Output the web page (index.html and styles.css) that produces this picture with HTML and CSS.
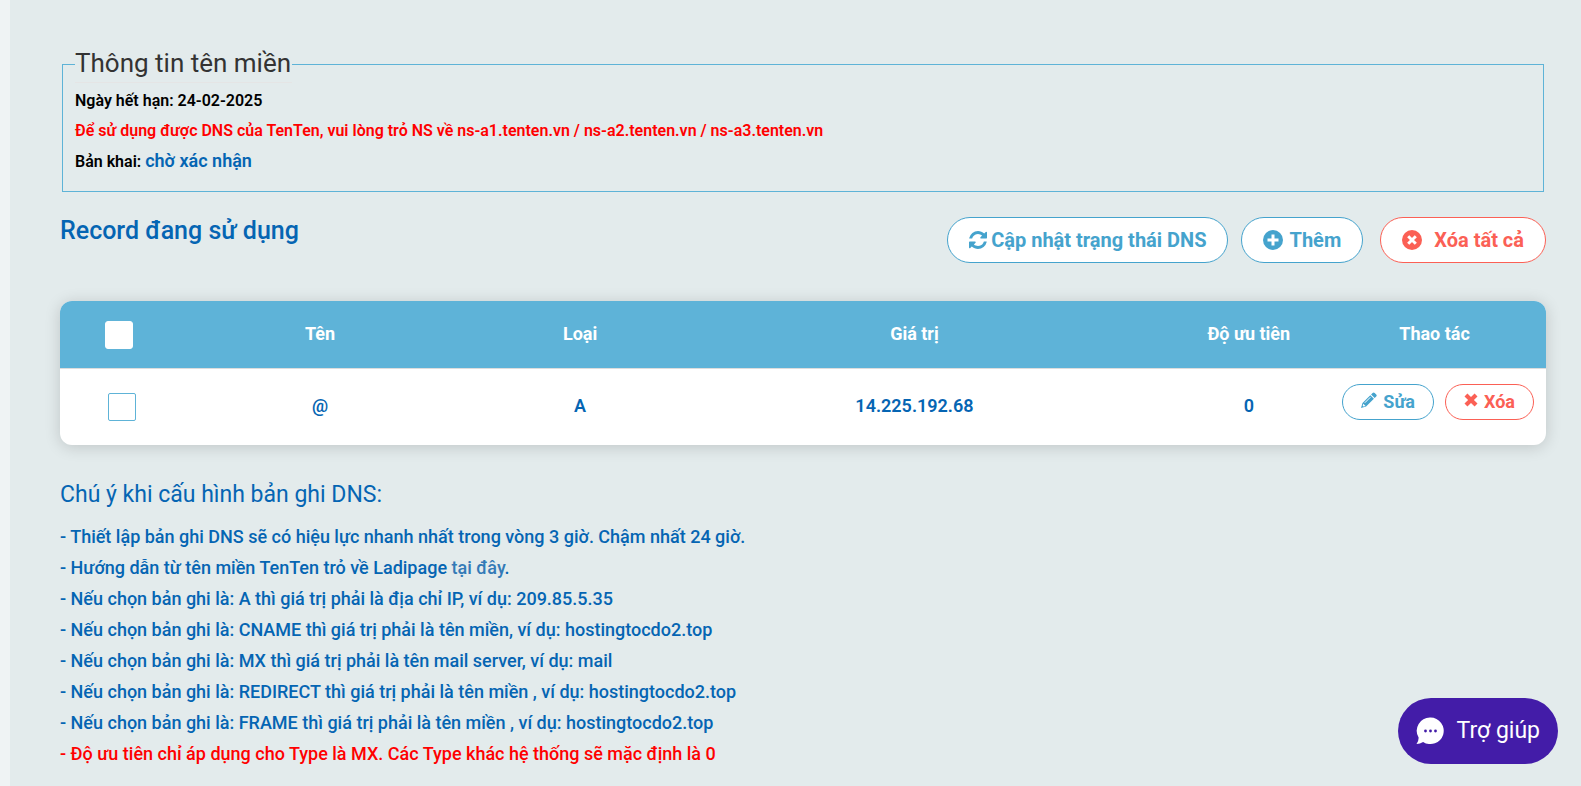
FILE: index.html
```html
<!DOCTYPE html>
<html lang="vi">
<head>
<meta charset="utf-8">
<title>Quản lý DNS</title>
<meta name="viewport" content="width=device-width, initial-scale=1">
<link rel="stylesheet" href="styles.css">
</head>
<body>
<main class="panel">
  <fieldset class="domain">
    <legend class="domain-title">Thông tin tên miền</legend>
    <p class="domain-line">Ngày hết hạn: 24-02-2025</p>
    <p class="domain-line warning">Để sử dụng được DNS của TenTen, vui lòng trỏ NS về ns-a1.tenten.vn / ns-a2.tenten.vn / ns-a3.tenten.vn</p>
    <p class="domain-line">Bản khai: <span class="status">chờ xác nhận</span></p>
  </fieldset>

  <div class="toolbar">
    <h2 class="toolbar-title">Record đang sử dụng</h2>
    <div class="toolbar-actions">
      <button class="btn" type="button">
        <svg class="icon-refresh" viewBox="0 0 1536 1536" aria-hidden="true"><path d="M1511 928q0 5-1 7-64 268-268 434.500T764 1536q-146 0-282.500-55T238 1324l-129 129q-19 19-45 19t-45-19-19-45V960q0-26 19-45t45-19h448q26 0 45 19t19 45-19 45l-137 137q71 66 161 102t187 36q134 0 250-65t186-179q11-17 53-117 8-23 30-23h192q13 0 22.500 9.500t9.500 22.500zm25-800v448q0 26-19 45t-45 19h-448q-26 0-45-19t-19-45 19-45l138-138Q969 256 768 256q-134 0-250 65T332 500q-11 17-53 117-8 23-30 23H50q-13 0-22.500-9.500T18 608v-7q65-268 270-434.500T768 0q146 0 284 55.500T1297 212l130-129q19-19 45-19t45 19 19 45z"/></svg>
        <span>Cập nhật trạng thái DNS</span>
      </button>
      <button class="btn btn-add" type="button">
        <svg class="icon-circle" viewBox="0 0 20 20" aria-hidden="true"><circle cx="10" cy="10" r="10"/><path class="mark" d="M10 4.500v11M4.500 10h11"/></svg>
        <span>Thêm</span>
      </button>
      <button class="btn btn-danger btn-clear" type="button">
        <svg class="icon-circle" viewBox="0 0 20 20" aria-hidden="true"><circle cx="10" cy="10" r="10"/><path class="mark" d="M6.200 6.200l7.600 7.600M13.800 6.200l-7.600 7.600"/></svg>
        <span>Xóa tất cả</span>
      </button>
    </div>
  </div>

  <table class="records">
    <colgroup>
      <col class="col-check"><col class="col-name"><col class="col-type"><col class="col-value"><col class="col-priority"><col class="col-actions">
    </colgroup>
    <thead>
      <tr>
        <th class="check-cell"><input class="check check-all" type="checkbox" aria-label="Chọn tất cả"></th>
        <th>Tên</th><th>Loại</th><th>Giá trị</th><th>Độ ưu tiên</th><th>Thao tác</th>
      </tr>
    </thead>
    <tbody>
      <tr>
        <td class="check-cell check-cell-row"><input class="check" type="checkbox" aria-label="Chọn bản ghi @"></td>
        <td>@</td><td>A</td><td>14.225.192.68</td><td>0</td>
        <td class="actions-cell">
          <div class="row-actions">
            <button class="btn btn-small" type="button">
              <svg class="icon-pencil" viewBox="0 0 16 16" aria-hidden="true"><path d="M11.600.900a1.500 1.500 0 0 1 2.100 0l1.500 1.500a1.500 1.500 0 0 1 0 2.100l-1.500 1.500-3.600-3.600zM9.300 3.200l3.600 3.600-7.800 7.800L0 16l1.500-5zM2.300 11.700l-.6 2 .8.800 2-.6z" fill-rule="evenodd"/><path class="pencil-line" d="M3.800 10.800l5.600-5.600"/></svg>
              <span>Sửa</span>
            </button>
            <button class="btn btn-small btn-danger" type="button">
              <svg class="icon-cross" viewBox="0 0 14 14" aria-hidden="true"><path d="M3.400.500L7 4.100 10.600.500l2.900 2.900L9.900 7l3.600 3.600-2.900 2.900L7 9.900l-3.600 3.600-2.900-2.900L4.100 7 .5 3.400z"/></svg>
              <span>Xóa</span>
            </button>
          </div>
        </td>
      </tr>
    </tbody>
  </table>

  <section class="notes">
    <h3 class="notes-title">Chú ý khi cấu hình bản ghi DNS:</h3>
    <p>- Thiết lập bản ghi DNS sẽ có hiệu lực nhanh nhất trong vòng 3 giờ. Chậm nhất 24 giờ.</p>
    <p>- Hướng dẫn từ tên miền TenTen trỏ về Ladipage <a class="guide" href="#">tại đây</a>.</p>
    <p>- Nếu chọn bản ghi là: A thì giá trị phải là địa chỉ IP, ví dụ: 209.85.5.35</p>
    <p>- Nếu chọn bản ghi là: CNAME thì giá trị phải là tên miền, ví dụ: hostingtocdo2.top</p>
    <p>- Nếu chọn bản ghi là: MX thì giá trị phải là tên mail server, ví dụ: mail</p>
    <p>- Nếu chọn bản ghi là: REDIRECT thì giá trị phải là tên miền , ví dụ: hostingtocdo2.top</p>
    <p>- Nếu chọn bản ghi là: FRAME thì giá trị phải là tên miền , ví dụ: hostingtocdo2.top</p>
    <p class="warning">- Độ ưu tiên chỉ áp dụng cho Type là MX. Các Type khác hệ thống sẽ mặc định là 0</p>
  </section>
</main>

<button class="help" type="button">
  <svg class="icon-chat" viewBox="0 0 28 28" aria-hidden="true"><path d="M14.500.500a13.300 13.300 0 1 1-7.400 24.400Q4 26.800.500 27q2.300-2.800 2.100-6.500A13.300 13.300 0 0 1 14.500.500z"/><g class="dots"><circle cx="9.500" cy="14" r="1.400"/><circle cx="14.500" cy="14" r="1.400"/><circle cx="19.500" cy="14" r="1.400"/></g></svg>
  <span>Trợ giúp</span>
</button>
</body>
</html>
```
FILE: styles.css
```css
* { box-sizing: border-box; }

body {
  margin: 0;
  background: #eff3f4;
  color: #0565b3;
  font: 500 18px/31px Roboto, "Noto Sans", sans-serif;
}

p, h2, h3 { margin: 0; }

.panel {
  min-height: 100vh;
  margin-left: 10px;
  padding: 46px 35px 8px 50px;
  background: #e3ebec;
}

.domain {
  min-width: 0;
  margin: 0 2px;
  padding: 0 12px 14px;
  border: 1px solid #5eb3d7;
}

.domain-title {
  margin-bottom: 3px;
  padding: 0 1px 2px 0;
  border-bottom: 1px solid #e5e5e5;
  color: #333;
  font-size: 26px;
  font-weight: 400;
  line-height: 34px;
}

.domain-line {
  color: #000;
  font-size: 16px;
  font-weight: 600;
  line-height: 30px;
}

.domain-line.warning, .warning { color: #f00; }

.status {
  color: #0565b3;
  font-size: 18px;
}

.toolbar {
  display: flex;
  justify-content: space-between;
  align-items: flex-start;
  margin-top: 25px;
}

.toolbar-title {
  font-size: 25px;
  font-weight: 500;
  line-height: 28px;
}

.toolbar-actions { display: flex; }

.btn {
  display: flex;
  align-items: center;
  gap: 4px;
  height: 46px;
  padding: 0 21px;
  border: 1px solid #45a3cd;
  border-radius: 23px;
  background: #fff;
  color: #45a3cd;
  font: 700 20px/28px Roboto, "Noto Sans", sans-serif;
  cursor: pointer;
}

.btn svg { fill: currentColor; }

.btn-add {
  gap: 6px;
  margin-left: 13px;
}

.btn-clear {
  gap: 12px;
  margin-left: 17px;
}

.btn-danger {
  border-color: #fb6055;
  color: #fb6055;
}

.icon-refresh {
  width: 18px;
  height: 18px;
}

.icon-circle {
  width: 20px;
  height: 20px;
}

.mark {
  fill: none;
  stroke: #fff;
  stroke-width: 3;
}

.records {
  width: 100%;
  margin-top: 38px;
  border-collapse: separate;
  border-spacing: 0;
  border-radius: 12px;
  background: #fff;
  box-shadow: 0 2px 16px rgba(0, 0, 0, 0.16);
  table-layout: fixed;
  text-align: center;
}

.col-check { width: 5%; }
.col-name { width: 25%; }
.col-type { width: 10%; }
.col-value { width: 35%; }
.col-priority { width: 10%; }
.col-actions { width: 15%; }

th, td { padding: 0; }

th {
  height: 67px;
  padding-bottom: 2px;
  background: #5eb3d8;
  color: #fff;
  font-weight: 700;
}

th.check-cell { padding-bottom: 0; }

th:first-child { border-top-left-radius: 12px; }
th:last-child { border-top-right-radius: 12px; }

td {
  height: 77px;
  padding-bottom: 4px;
  border-top: 1px solid #ddd;
  font-weight: 600;
}

.check-cell {
  padding-left: 45px;
  text-align: left;
}

.check-cell-row {
  padding-bottom: 0;
  padding-left: 48px;
}

.check {
  display: block;
  width: 28px;
  height: 28px;
  margin: 0;
  border: 1px solid #5eb3d7;
  border-radius: 2px;
  background: #fff;
  appearance: none;
}

.check-all {
  border-color: #fff;
  border-radius: 3px;
}

.actions-cell { vertical-align: top; }

.row-actions {
  display: flex;
  justify-content: flex-end;
  gap: 11px;
  padding: 15px 12px 0 0;
}

.btn-small {
  gap: 6px;
  height: 36px;
  padding: 0 18px;
  border-radius: 18px;
  font-size: 18px;
}

.btn-small svg { margin-bottom: 4px; }

.icon-pencil {
  width: 16px;
  height: 16px;
}

.pencil-line {
  stroke: #fff;
  stroke-width: 1;
}

.icon-cross {
  width: 14px;
  height: 14px;
}

.notes { margin-top: 32px; }

.notes-title {
  margin-bottom: 8px;
  font-size: 23px;
  font-weight: 400;
  line-height: 36px;
}

.guide {
  color: #337ab7;
  text-decoration: none;
}

.help {
  position: fixed;
  right: 23px;
  bottom: 22px;
  display: flex;
  align-items: center;
  gap: 13px;
  height: 66px;
  padding: 0 18px;
  border: 0;
  border-radius: 33px;
  background: #431ca8;
  color: #fff;
  font: 400 23px/32px Roboto, "Noto Sans", sans-serif;
  cursor: pointer;
}

.icon-chat {
  width: 28px;
  height: 28px;
  fill: #fff;
}

.dots { fill: #431ca8; }
```
